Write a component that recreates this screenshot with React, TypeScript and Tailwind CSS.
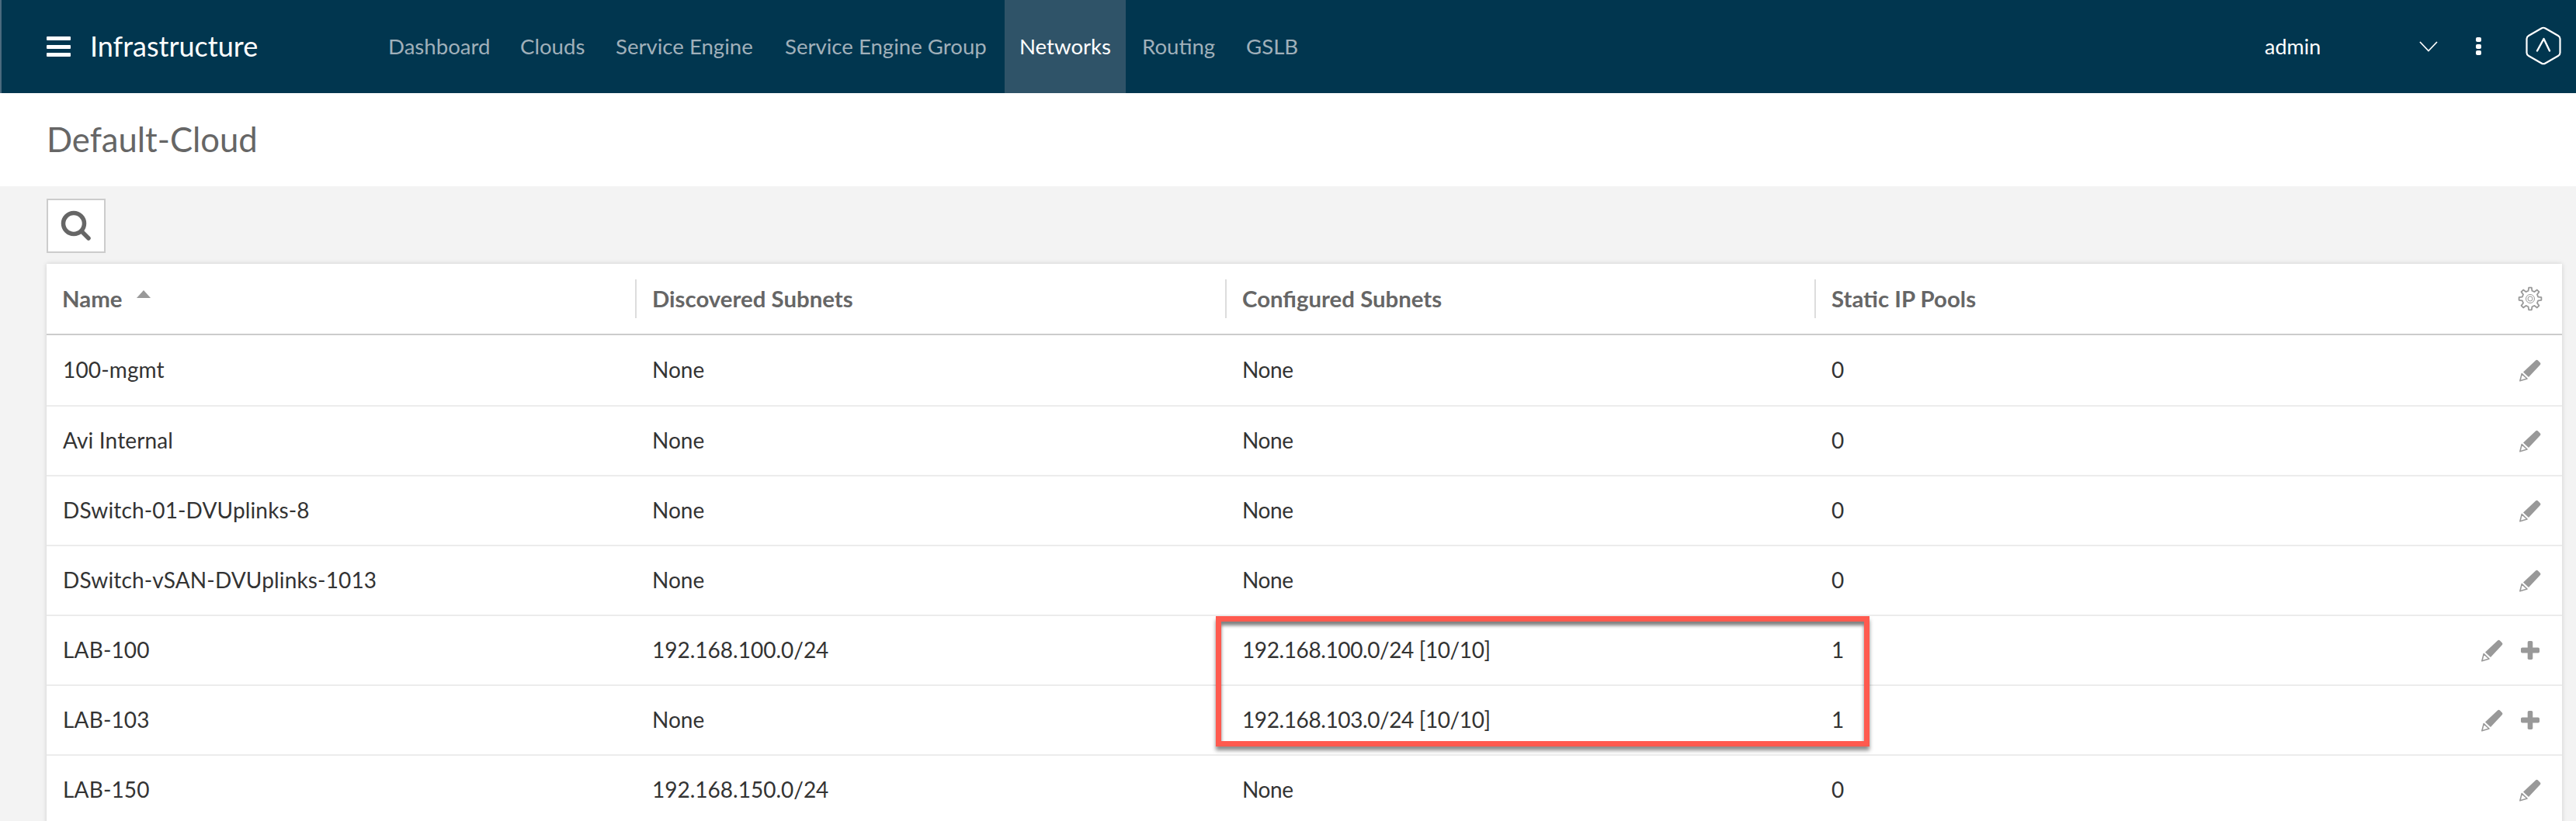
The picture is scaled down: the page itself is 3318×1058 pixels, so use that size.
const NAV = [
  { label: "Dashboard", left: "left-[500px]" },
  { label: "Clouds", left: "left-[670px]" },
  { label: "Service Engine", left: "left-[793px]" },
  { label: "Service Engine Group", left: "left-[1011px]" },
  { label: "Routing", left: "left-[1471px]" },
  { label: "GSLB", left: "left-[1605px]" },
]

const ROWS = [
  { name: "100-mgmt", disc: "None", conf: "None", pools: "0" },
  { name: "Avi Internal", disc: "None", conf: "None", pools: "0" },
  { name: "DSwitch-01-DVUplinks-8", disc: "None", conf: "None", pools: "0" },
  { name: "DSwitch-vSAN-DVUplinks-1013", disc: "None", conf: "None", pools: "0" },
  { name: "LAB-100", disc: "192.168.100.0/24", conf: "192.168.100.0/24 [10/10]", pools: "1", add: true },
  { name: "LAB-103", disc: "None", conf: "192.168.103.0/24 [10/10]", pools: "1", add: true },
  { name: "LAB-150", disc: "192.168.150.0/24", conf: "None", pools: "0" },
]

const gearPath = () => {
  const pts: string[] = []
  const teeth = 8
  for (let i = 0; i < teeth; i++) {
    const a = (i / teeth) * Math.PI * 2
    const step = (Math.PI * 2) / teeth
    const at = (r: number, t: number) => {
      const x = 16 + r * Math.cos(a + t * step)
      const y = 16 + r * Math.sin(a + t * step)
      return `${x.toFixed(2)} ${y.toFixed(2)}`
    }
    pts.push(`${i === 0 ? "M" : "L"}${at(10.5, -0.3)}`)
    pts.push(`L${at(14.5, -0.16)}`)
    pts.push(`L${at(14.5, 0.16)}`)
    pts.push(`L${at(10.5, 0.3)}`)
  }
  return pts.join(" ") + " Z"
}

const Pencil = () => (
  <svg width="28" height="29" viewBox="0 0 28 29">
    <path d="M5 16.5 L21 1.5 a2.2 2.2 0 0 1 3 0 l2.7 2.7 a2.2 2.2 0 0 1 0 3 L12 23 Z" fill="#999" />
    <path d="M3.2 18.6 L0.9 27.8 L10 25 Z" fill="#fff" stroke="#999" strokeWidth="1.6" strokeLinejoin="round" />
  </svg>
)

const Plus = () => (
  <svg width="24" height="24" viewBox="0 0 24 24" fill="#999">
    <rect x="8.7" y="0" width="6.6" height="24" rx="1.8" />
    <rect x="0" y="8.5" width="24" height="7" rx="1.8" />
  </svg>
)

const Logo = () => (
  <svg width="46" height="50" viewBox="0 0 46 50" fill="none" stroke="#fff" strokeLinecap="round" strokeLinejoin="round">
    <path
      d="M20.5 2.5 Q23 1 25.5 2.5 L42 12 Q44.5 13.5 44.5 16 V34 Q44.5 36.5 42 38 L25.5 47.5 Q23 49 20.5 47.5 L4 38 Q1.5 36.5 1.5 34 V16 Q1.5 13.5 4 12 Z"
      strokeWidth="2.2"
    />
    <path d="M15 31.5 L23.5 16 L31 31.5" strokeWidth="2.4" />
  </svg>
)

export default function App() {
  return (
    <div className="relative h-[1058px] w-[3318px] overflow-hidden bg-[#f3f3f3] font-[family-name:Lato,sans-serif] text-[28px] text-[#333]">
      <div className="absolute inset-x-0 top-0 h-[120px] bg-[#01364f]">
        <div className="absolute left-0 top-0 h-[120px] w-[2px] bg-[#4b6a7e]" />
        <div className="absolute left-[60px] top-[47px] flex h-[26px] w-[31px] flex-col justify-between">
          <div className="h-[5px] rounded-[1px] bg-white" />
          <div className="h-[5px] rounded-[1px] bg-white" />
          <div className="h-[5px] rounded-[1px] bg-white" />
        </div>
        <div className="absolute left-[116px] top-[36px] text-[36px] leading-[46px] text-white">Infrastructure</div>
        {NAV.map(n => (
          <div key={n.label} className={`absolute top-[40px] text-[27.6px] leading-[40px] text-[#a0b0ba] ${n.left}`}>
            {n.label}
          </div>
        ))}
        <div className="absolute left-[1294px] top-0 flex h-[120px] w-[156px] items-center justify-center bg-[#2f5368] text-[27.6px] text-white">
          Networks
        </div>
        <div className="absolute left-[2917px] top-[41px] text-[27px] leading-[38px] text-white">admin</div>
        <svg className="absolute left-[3116px] top-[53px]" width="24" height="14" viewBox="0 0 24 14" fill="none">
          <path d="M1 1 L12 12.5 L23 1" stroke="#fff" strokeWidth="1.7" />
        </svg>
        <div className="absolute left-[3189px] top-[48px] flex h-[23px] w-[7px] flex-col justify-between">
          <div className="h-[6px] rounded-[2px] bg-white" />
          <div className="h-[6px] rounded-[2px] bg-white" />
          <div className="h-[6px] rounded-[2px] bg-white" />
        </div>
        <div className="absolute left-[3253px] top-[34px]">
          <Logo />
        </div>
      </div>

      <div className="absolute inset-x-0 top-[120px] h-[120px] bg-white">
        <div className="absolute left-[60px] top-[33px] text-[43.6px] leading-[52px] text-[#666]">Default-Cloud</div>
      </div>

      <div className="absolute left-[60px] top-[256px] flex h-[70px] w-[76px] items-center justify-center border-2 border-[#ccc] bg-white">
        <svg width="40" height="40" viewBox="0 0 40 40" fill="none" stroke="#666" strokeLinecap="round">
          <circle cx="17" cy="17" r="13.5" strokeWidth="5.5" />
          <path d="M27 27 L36 36" strokeWidth="5.5" />
        </svg>
      </div>

      <div className="absolute left-[60px] top-[340px] h-[740px] w-[3240px] bg-white shadow-[0_0_6px_rgba(0,0,0,0.15)]">
        <div className="relative h-[92px] border-b-2 border-[#ccc] text-[29.4px] font-bold text-[#666]">
          <div className="absolute left-[20px] top-[25px] leading-[40px]">Name</div>
          <svg className="absolute left-[116px] top-[34px]" width="18" height="10" viewBox="0 0 18 10">
            <path d="M9 0 L18 10 H0 Z" fill="#999" />
          </svg>
          <div className="absolute left-[780px] top-[25px] leading-[40px]">Discovered Subnets</div>
          <div className="absolute left-[1540px] top-[25px] leading-[40px]">Configured Subnets</div>
          <div className="absolute left-[2299px] top-[25px] leading-[40px]">Static IP Pools</div>
          <div className="absolute left-[758px] top-[20px] h-[50px] w-[2px] bg-[#ddd]" />
          <div className="absolute left-[1518px] top-[20px] h-[50px] w-[2px] bg-[#ddd]" />
          <div className="absolute left-[2277px] top-[20px] h-[50px] w-[2px] bg-[#ddd]" />
          <svg className="absolute left-[3183px] top-[29px]" width="32" height="32" viewBox="0 0 32 32" fill="none" stroke="#999">
            <path d={gearPath()} strokeWidth="1.8" strokeLinejoin="round" />
            <circle cx="16" cy="16" r="5.5" strokeWidth="1" />
            <circle cx="16" cy="16" r="3" strokeWidth="1" />
          </svg>
        </div>
        {ROWS.map((r, i) => (
          <div
            key={r.name}
            className={`relative flex items-center border-b-2 border-[#ececec] ${i === 0 ? "h-[92px]" : "h-[90px]"}`}
          >
            <div className="absolute left-[21px] -translate-y-px tracking-[0.15px]">{r.name}</div>
            <div className="absolute left-[780px] -translate-y-px">{r.disc}</div>
            <div className="absolute left-[1540px] -translate-y-px tracking-[-0.4px]">{r.conf}</div>
            <div className="absolute left-[2299px] -translate-y-px">{r.pools}</div>
            <div className={`absolute flex items-center gap-[23px] ${r.add ? "right-[29px]" : "right-[27px]"}`}>
              <Pencil />
              {r.add && <Plus />}
            </div>
          </div>
        ))}
      </div>

      <div className="absolute left-[1566px] top-[794px] h-[168px] w-[842px] border-[7px] border-[#ff5a4f] shadow-[0_5px_5px_rgba(0,0,0,0.45),inset_0_5px_4px_rgba(0,0,0,0.5)]" />
    </div>
  )
}
